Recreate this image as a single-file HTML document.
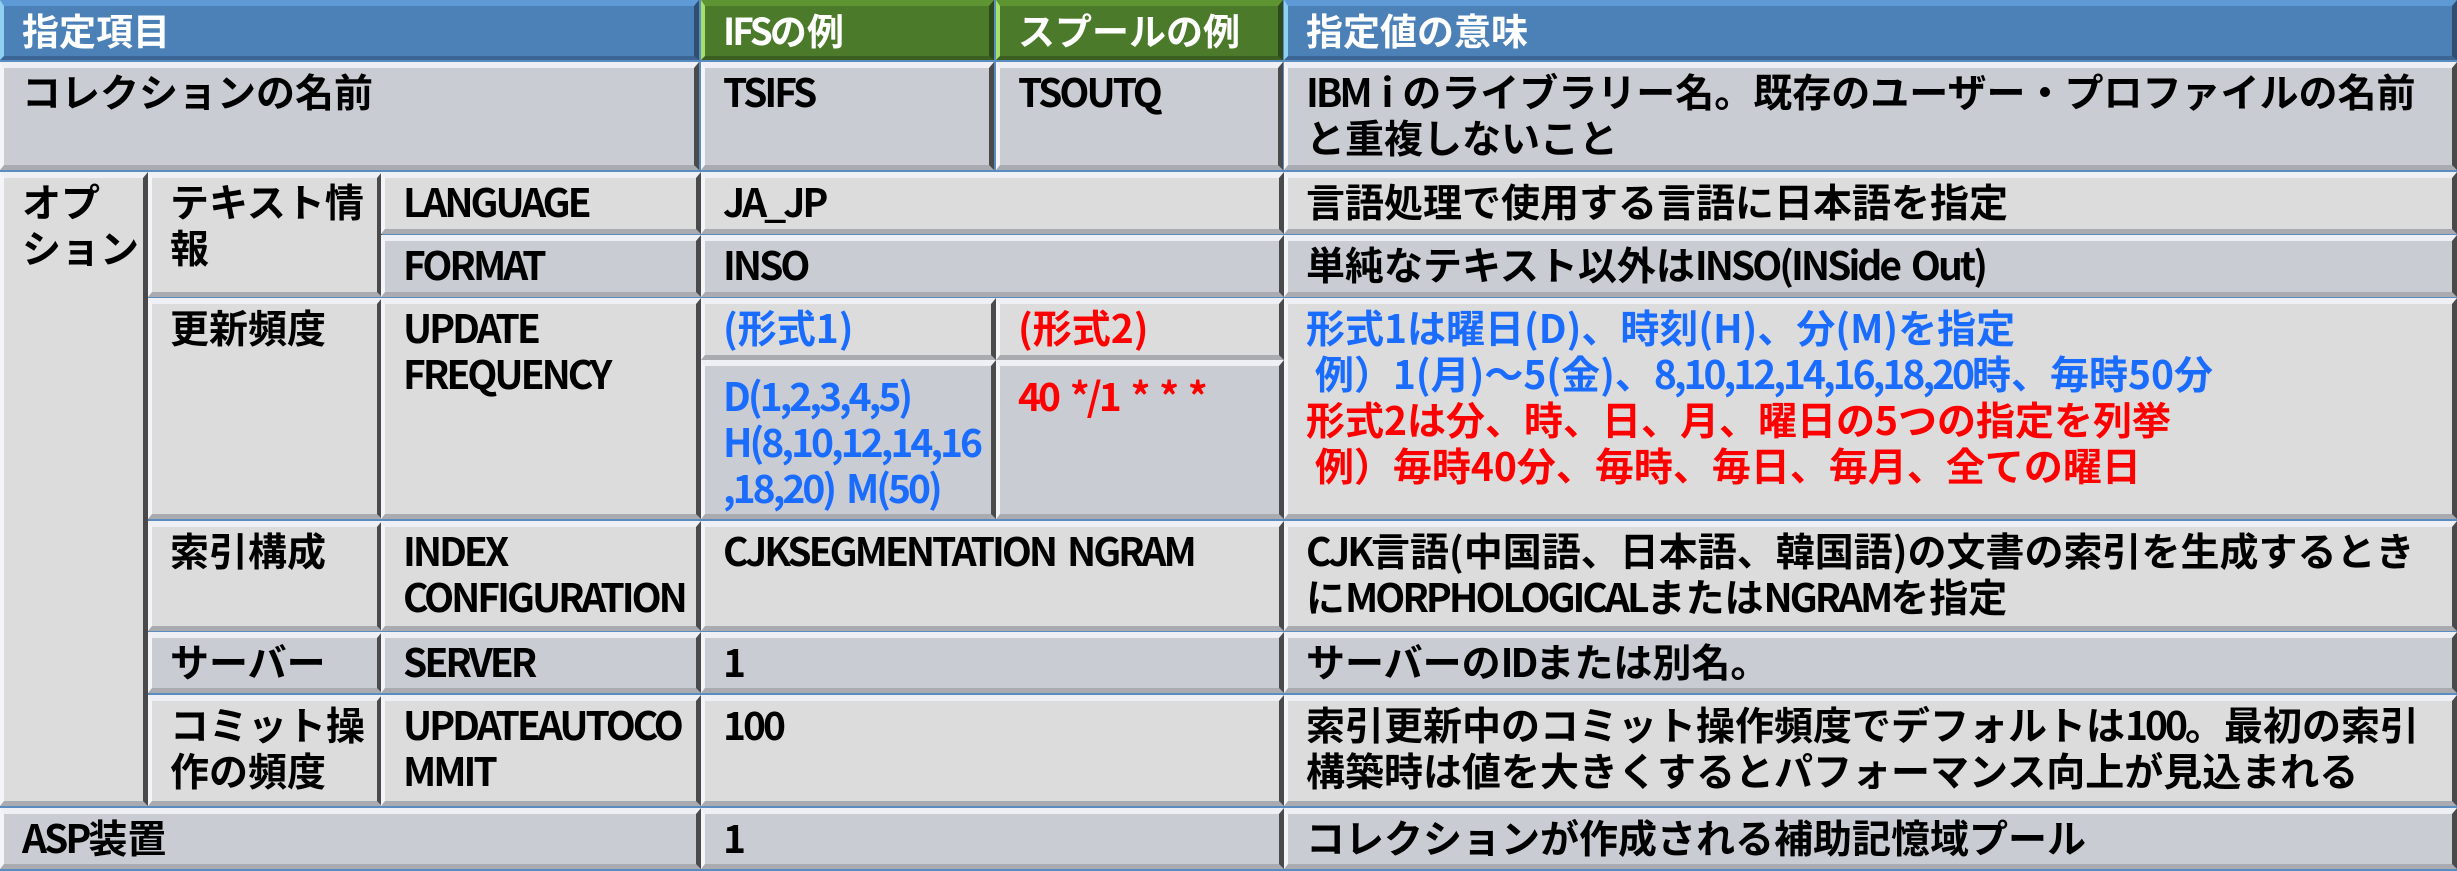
<!DOCTYPE html>
<html><head><meta charset="utf-8"><style>
*{margin:0;padding:0;box-sizing:border-box}
body{width:2457px;height:871px;background:#5a8cc0;position:relative;overflow:hidden;font-family:"Liberation Sans","Noto Sans CJK JP",sans-serif;font-weight:bold;}
.c{position:absolute;padding:0 0 0 18px;font-size:39px;line-height:46px;color:#000;white-space:nowrap;
 font-family:"Noto Sans CJK JP","Liberation Sans",sans-serif;font-weight:bold;
 border-top:6px solid #eef0f5;border-left:4px solid #f4f5f8;border-right:5px solid #4a4a4a;border-bottom:5px solid #a9abb0;}
.d{background:#c9ccd3}
.l{background:#dcdcdc}
.hb{background:#4c81b8;color:#fff;border-top:6px solid #5d9ad6;border-left:4px solid #8fd0f0;border-right:5px solid #2f4f70;border-bottom:4px solid #3a6594;padding-top:0;font-size:37px;}
.hg{background:#4b7a2a;color:#fff;border-top:6px solid #5f9433;border-left:4px solid #a6e06a;border-right:5px solid #2f4a1a;border-bottom:4px solid #3a5f20;padding-top:0;font-size:37px;}
.b{color:#1a6cff}.r{color:#ff0000}
.n{letter-spacing:-3px;word-spacing:6px}
</style></head><body>
<div class="c hb" style="left:0;top:0;width:699px;height:60px">指定項目</div>
<div class="c hg" style="left:701px;top:0;width:293px;height:60px"><span class="n">IFS</span>の例</div>
<div class="c hg" style="left:996px;top:0;width:287px;height:60px">スプールの例</div>
<div class="c hb" style="left:1284px;top:0;width:1173px;height:60px">指定値の意味</div>

<div class="c d" style="left:0;top:62px;width:699px;height:108px">コレクションの名前</div>
<div class="c d n" style="left:701px;top:62px;width:293px;height:108px">TSIFS</div>
<div class="c d n" style="left:996px;top:62px;width:287px;height:108px">TSOUTQ</div>
<div class="c d" style="left:1284px;top:62px;width:1173px;height:108px"><span class="n">IBM i </span>のライブラリー名。既存のユーザー・プロファイルの名前<br>と重複しないこと</div>

<div class="c l" style="left:0;top:172px;width:148px;height:634px">オプ<br>ション</div>
<div class="c l" style="left:148px;top:172px;width:234px;height:125px">テキスト情<br>報</div>
<div class="c l n" style="left:381px;top:172px;width:320px;height:62px">LANGUAGE</div>
<div class="c l n" style="left:701px;top:172px;width:583px;height:62px">JA_JP</div>
<div class="c l" style="left:1284px;top:172px;width:1173px;height:62px">言語処理で使用する言語に日本語を指定</div>
<div class="c d n" style="left:381px;top:235px;width:320px;height:62px">FORMAT</div>
<div class="c d n" style="left:701px;top:235px;width:583px;height:62px">INSO</div>
<div class="c d" style="left:1284px;top:235px;width:1173px;height:62px">単純なテキスト以外は<span class="n">INSO(INSide Out)</span></div>

<div class="c l" style="left:148px;top:298px;width:234px;height:221px">更新頻度</div>
<div class="c l n" style="left:381px;top:298px;width:320px;height:221px">UPDATE<br>FREQUENCY</div>
<div class="c l b" style="left:701px;top:298px;width:295px;height:62px">(形式1)</div>
<div class="c l r" style="left:996px;top:298px;width:288px;height:62px">(形式2)</div>
<div class="c d b n" style="left:701px;top:360px;width:295px;height:159px;padding-top:6px">D(1,2,3,4,5)<br>H(8,10,12,14,16<br>,18,20) M(50)</div>
<div class="c d r n" style="left:996px;top:360px;width:288px;height:159px;padding-top:6px">40 */1 * * *</div>
<div class="c l" style="left:1284px;top:298px;width:1173px;height:221px"><span class="b">形式1は曜日(D)、時刻(H)、分(M)を指定<br>&nbsp;例）1(月)～5(金)、<span class="n">8,10,12,14,16,18,20</span>時、毎時50分</span><br><span class="r">形式2は分、時、日、月、曜日の5つの指定を列挙<br>&nbsp;例）毎時40分、毎時、毎日、毎月、全ての曜日</span></div>

<div class="c l" style="left:148px;top:521px;width:234px;height:110px">索引構成</div>
<div class="c l n" style="left:381px;top:521px;width:320px;height:110px">INDEX<br>CONFIGURATION</div>
<div class="c l n" style="left:701px;top:521px;width:583px;height:110px">CJKSEGMENTATION NGRAM</div>
<div class="c l" style="left:1284px;top:521px;width:1173px;height:110px"><span class="n">CJK</span>言語(中国語、日本語、韓国語)の文書の索引を生成するとき<br>に<span class="n">MORPHOLOGICAL</span>または<span class="n">NGRAM</span>を指定</div>

<div class="c d" style="left:148px;top:632px;width:234px;height:61px">サーバー</div>
<div class="c d n" style="left:381px;top:632px;width:320px;height:61px">SERVER</div>
<div class="c d" style="left:701px;top:632px;width:583px;height:61px">1</div>
<div class="c d" style="left:1284px;top:632px;width:1173px;height:61px">サーバーの<span class="n">ID</span>または別名。</div>

<div class="c l" style="left:148px;top:695px;width:234px;height:111px">コミット操<br>作の頻度</div>
<div class="c l n" style="left:381px;top:695px;width:320px;height:111px">UPDATEAUTOCO<br>MMIT</div>
<div class="c l n" style="left:701px;top:695px;width:583px;height:111px">100</div>
<div class="c l" style="left:1284px;top:695px;width:1173px;height:111px">索引更新中のコミット操作頻度でデフォルトは<span class="n">100</span>。最初の索引<br>構築時は値を大きくするとパフォーマンス向上が見込まれる</div>

<div class="c d n" style="left:0;top:808px;width:701px;height:61px">ASP<span style="letter-spacing:0">装置</span></div>
<div class="c d" style="left:701px;top:808px;width:583px;height:61px">1</div>
<div class="c d" style="left:1284px;top:808px;width:1173px;height:61px">コレクションが作成される補助記憶域プール</div>
</body></html>
